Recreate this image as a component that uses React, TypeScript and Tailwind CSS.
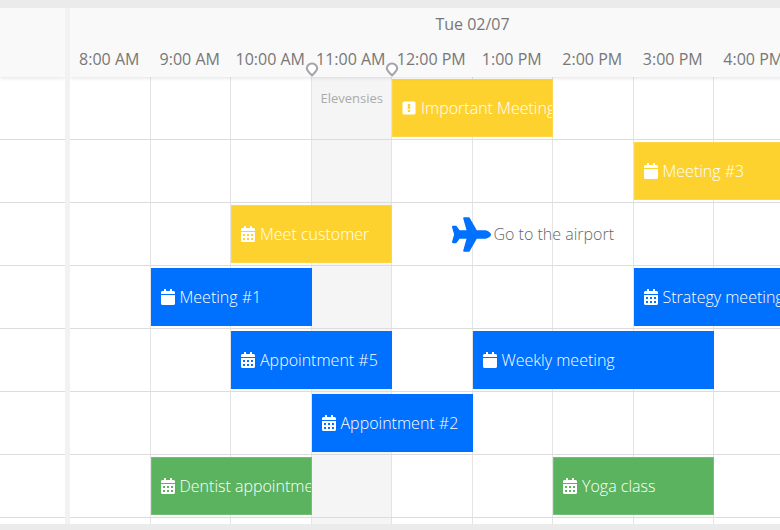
import { FaCalendar, FaCalendarAlt, FaPlane } from 'react-icons/fa';

const HOURS = [
  '8:00 AM',
  '9:00 AM',
  '10:00 AM',
  '11:00 AM',
  '12:00 PM',
  '1:00 PM',
  '2:00 PM',
  '3:00 PM',
  '4:00 PM',
  '5:00 PM',
];

// Index of the hour that is shaded as a break
const BREAK = 3;

type SchedulerEvent = {
  name: string;
  icon: 'calendar' | 'days' | 'important';
  color: string;
  start: number;
  span: number;
};

const YELLOW = 'bg-[#fdd22f] border-[#fdd649]';
const BLUE = 'bg-[#0070ff] border-[#0070ff]';
const GREEN = 'bg-[#5bb35f] border-[#74bf77]';

const ROWS: SchedulerEvent[][] = [
  [{ name: 'Important Meeting', icon: 'important', color: YELLOW, start: 5, span: 2 }],
  [{ name: 'Meeting #3', icon: 'calendar', color: YELLOW, start: 8, span: 3 }],
  [{ name: 'Meet customer', icon: 'days', color: YELLOW, start: 3, span: 2 }],
  [
    { name: 'Meeting #1', icon: 'calendar', color: BLUE, start: 2, span: 2 },
    { name: 'Strategy meeting', icon: 'days', color: BLUE, start: 8, span: 2 },
  ],
  [
    { name: 'Appointment #5', icon: 'days', color: BLUE, start: 3, span: 2 },
    { name: 'Weekly meeting', icon: 'calendar', color: BLUE, start: 6, span: 3 },
  ],
  [{ name: 'Appointment #2', icon: 'days', color: BLUE, start: 4, span: 2 }],
  [
    { name: 'Dentist appointment', icon: 'days', color: GREEN, start: 2, span: 2 },
    { name: 'Yoga class', icon: 'days', color: GREEN, start: 7, span: 2 },
  ],
];

function EventIcon({ icon }: { icon: SchedulerEvent['icon'] }) {
  if (icon === 'calendar') return <FaCalendar className="h-4 w-[14px] shrink-0" />;
  if (icon === 'days') return <FaCalendarAlt className="h-4 w-[14px] shrink-0" />;
  return (
    <svg viewBox="0 0 14 14" className="h-[14px] w-[14px] shrink-0">
      <rect x="0.5" y="0.5" width="13" height="13" rx="1.5" fill="#fff" />
      <path d="M5.8 3h2.4v4.8H5.8z" fill="#fdd22f" />
      <rect x="5.8" y="9" width="2.4" height="2" rx="0.6" fill="#fdd22f" />
    </svg>
  );
}

function Pin({ className }: { className: string }) {
  return (
    <svg viewBox="0 0 14 15" className={`absolute z-10 h-[15px] w-[14px] ${className}`}>
      <path
        d="M7 1.4a5.2 5.2 0 0 1 5.2 5.2c0 2.4-3 4.2-5.2 6.8-2.2-2.6-5.2-4.4-5.2-6.8A5.2 5.2 0 0 1 7 1.4z"
        fill="#fff"
        stroke="#a3a3aa"
        strokeWidth="2"
      />
    </svg>
  );
}

function Cells() {
  return (
    <>
      {HOURS.map((hour, i) => (
        <div
          key={hour}
          style={{ gridColumn: i + 1 }}
          className={`row-start-1 border-r border-[#e4e4e4] ${i === BREAK ? 'bg-[#f5f5f5]' : ''}`}
        />
      ))}
    </>
  );
}

function EventBar({ event }: { event: SchedulerEvent }) {
  return (
    <button
      type="button"
      style={{ gridColumn: `${event.start} / span ${event.span}` }}
      className={`row-start-1 mt-[2px] flex h-[58px] items-center gap-[5px] overflow-hidden border pl-[9px] text-left font-light whitespace-nowrap text-white ${event.color}`}
    >
      <EventIcon icon={event.icon} />
      <span>{event.name}</span>
    </button>
  );
}

export default function App() {
  return (
    <div className="overflow-hidden border-t-8 border-b-6 border-[#ebebeb] bg-white font-['Open_Sans',sans-serif] text-base">
      <div className="flex">
        {/* Locked resource column */}
        <div className="w-[65px] shrink-0">
          <div className="h-[69px] bg-[#f9f9f9] shadow-[0_1px_4px_rgba(0,0,0,0.12)]" />
          {ROWS.map((_, i) => (
            <div key={i} className="h-[63px] border-b border-[#dcdcdc]" />
          ))}
        </div>

        {/* Splitter */}
        <div className="z-10 w-[5px] shrink-0 bg-[#f2f2f2]" />

        {/* Timeline */}
        <div className="min-w-0 flex-1 overflow-hidden">
          <div className="min-w-[805px]">
            <header className="relative h-[69px] bg-[#f9f9f9] text-[#777] shadow-[0_1px_4px_rgba(0,0,0,0.12)]">
              <div className="flex h-8 items-center justify-center">Tue 02/07</div>
              <div className="grid h-[37px] grid-cols-10">
                {HOURS.map((hour, i) => (
                  <div key={hour} className="relative flex items-center justify-center pr-[2px] whitespace-nowrap">
                    {hour}
                    {i === BREAK && (
                      <>
                        <Pin className="bottom-0 -left-[7px]" />
                        <Pin className="-right-[7px] bottom-0" />
                      </>
                    )}
                  </div>
                ))}
              </div>
            </header>

            {ROWS.map((events, i) => (
              <div key={i} className="grid h-[63px] grid-cols-10 border-b border-[#dcdcdc]">
                <Cells />
                {i === 0 && (
                  <div className="col-start-4 row-start-1 pt-3 text-center text-[13px] text-[#aaa]">Elevensies</div>
                )}
                {i === 2 && (
                  <div className="col-span-4 col-start-6 row-start-1 -ml-[21px] flex items-center gap-[3px] font-light whitespace-nowrap text-[#666]">
                    <FaPlane className="h-[35px] w-[39px] shrink-0 text-[#0070ff]" />
                    <span>Go to the airport</span>
                  </div>
                )}
                {events.map((event) => (
                  <EventBar key={event.name} event={event} />
                ))}
              </div>
            ))}
            <div className="grid h-[6px] grid-cols-10">
              <Cells />
            </div>
          </div>
        </div>
      </div>
    </div>
  );
}
